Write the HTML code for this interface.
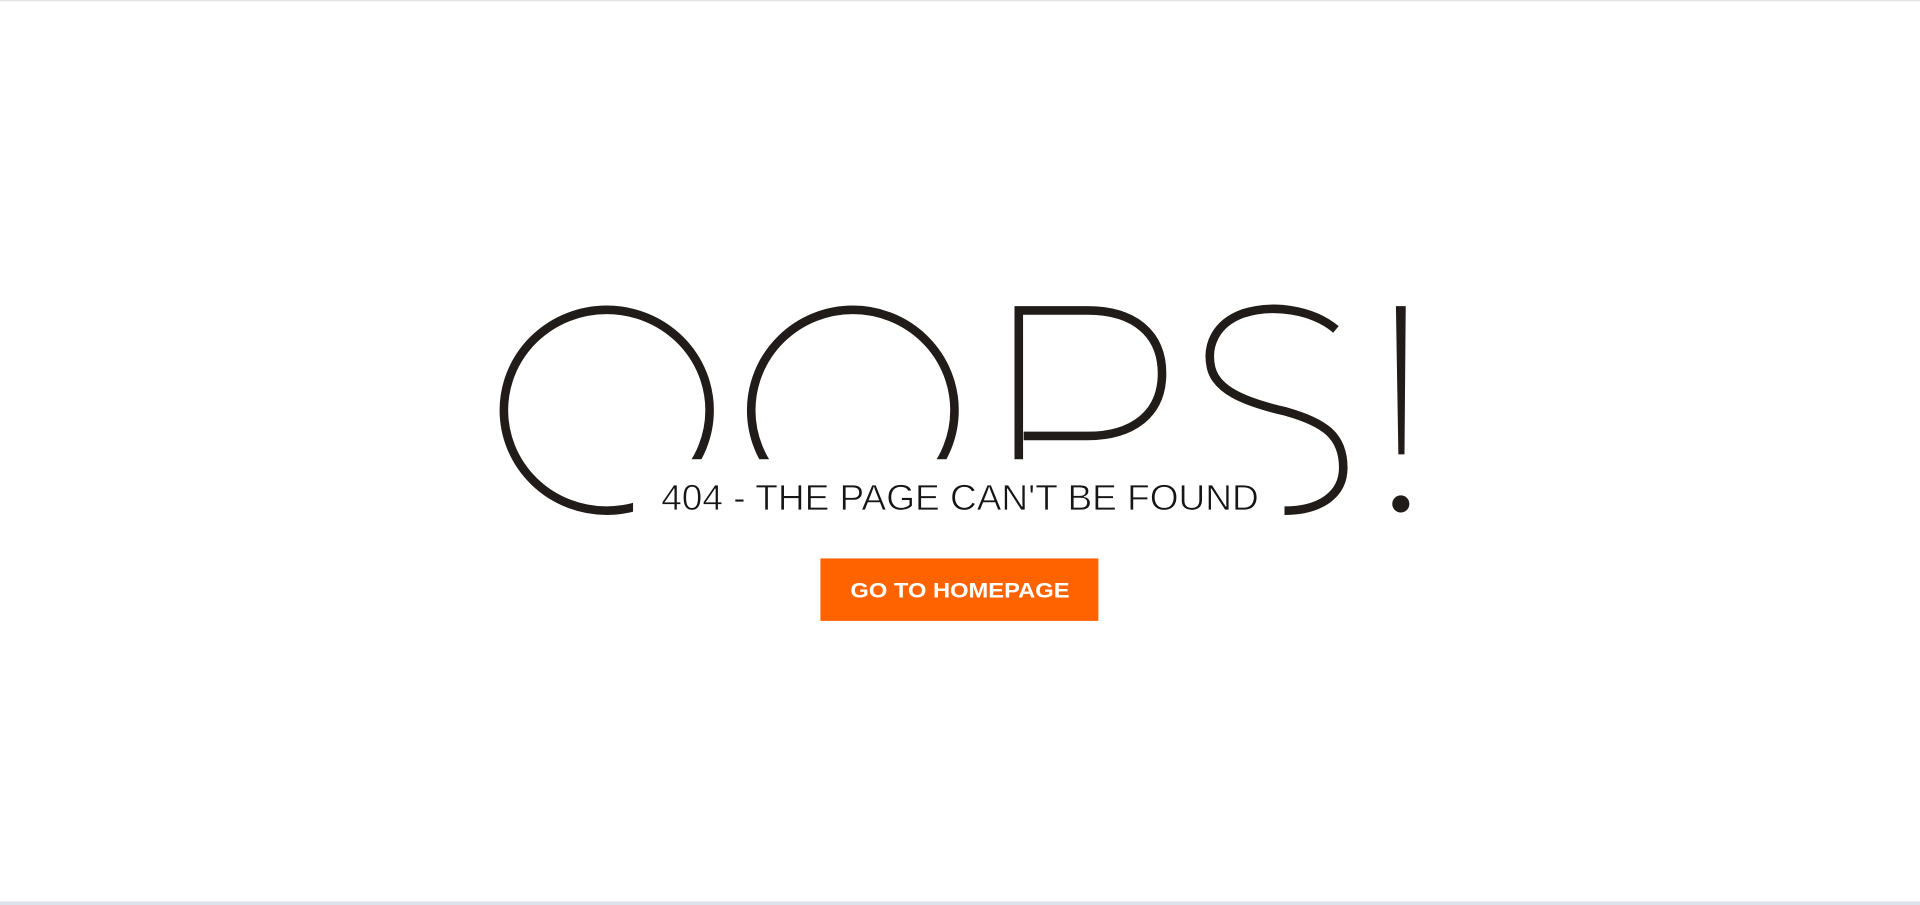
<!DOCTYPE html>
<html><head><meta charset="utf-8"><style>
html,body{margin:0;padding:0;background:#fff;width:1920px;height:905px;overflow:hidden}
svg{display:block}
</style></head><body>
<svg width="1920" height="905" viewBox="0 0 1568 739" preserveAspectRatio="none">
<line x1="0" y1="0.5" x2="1568" y2="0.5" stroke="#e4e4e4" stroke-width="1"/>
<g fill="none" stroke="#211c19" stroke-width="7">
<ellipse cx="495.5" cy="335" rx="84" ry="82"/>
<ellipse cx="696.5" cy="335" rx="83" ry="82"/>
<path d="M832,376 V253.5 H888 C928,253.5 949,274 949,305 C949,338 925,356 888,356 H836"/>
<path d="M1091,269 C1072,253 1040,248 1015,256 C993,264 985,282 989,300 C993,318 1015,328 1050,336 C1082,345 1097,356 1097,382 C1097,404 1078,417 1049,417"/>
</g>
<polygon points="1140,250 1148,250 1147,371 1142,371" fill="#211c19"/>
<circle cx="1144" cy="411.5" r="7" fill="#211c19"/>
<rect x="517" y="375" width="531" height="56" fill="#fff"/>
<text x="540" y="416.5" font-family="Liberation Sans, sans-serif" font-size="29.5" fill="#151515" textLength="488" lengthAdjust="spacingAndGlyphs" stroke="#fff" stroke-width="0.6" paint-order="normal">404 - THE PAGE CAN'T BE FOUND</text>
<rect x="670" y="456" width="227" height="51" fill="#ff6300"/>
<text x="784" y="488" text-anchor="middle" font-family="Liberation Sans, sans-serif" font-size="17.5" font-weight="700" fill="#fff" textLength="179" lengthAdjust="spacingAndGlyphs">GO TO HOMEPAGE</text>
<rect x="0" y="736" width="1568" height="3" fill="#dde3ea"/>
</svg>
</body></html>
